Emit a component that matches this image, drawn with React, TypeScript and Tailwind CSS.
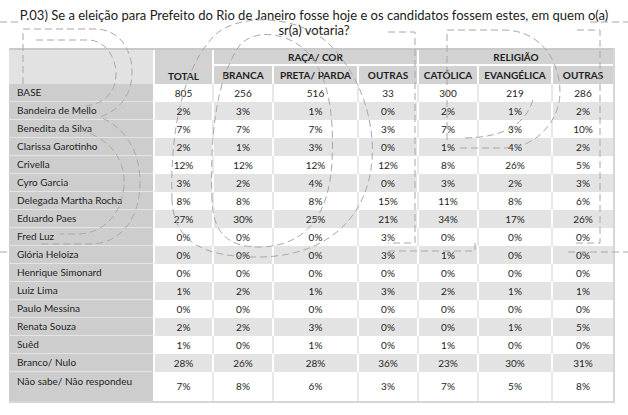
import React from "react";

const rows: string[][] = [
  ["BASE", "805", "256", "516", "33", "300", "219", "286"],
  ["Bandeira de Mello", "2%", "3%", "1%", "0%", "2%", "1%", "2%"],
  ["Benedita da Silva", "7%", "7%", "7%", "3%", "7%", "3%", "10%"],
  ["Clarissa Garotinho", "2%", "1%", "3%", "0%", "1%", "4%", "2%"],
  ["Crivella", "12%", "12%", "12%", "12%", "8%", "26%", "5%"],
  ["Cyro Garcia", "3%", "2%", "4%", "0%", "3%", "2%", "3%"],
  ["Delegada Martha Rocha", "8%", "8%", "8%", "15%", "11%", "8%", "6%"],
  ["Eduardo Paes", "27%", "30%", "25%", "21%", "34%", "17%", "26%"],
  ["Fred Luz", "0%", "0%", "0%", "3%", "0%", "0%", "0%"],
  ["Glória Heloiza", "0%", "0%", "0%", "3%", "1%", "0%", "0%"],
  ["Henrique Simonard", "0%", "0%", "0%", "0%", "0%", "0%", "0%"],
  ["Luiz Lima", "1%", "2%", "1%", "3%", "2%", "1%", "1%"],
  ["Paulo Messina", "0%", "0%", "0%", "0%", "0%", "0%", "0%"],
  ["Renata Souza", "2%", "2%", "3%", "0%", "0%", "1%", "5%"],
  ["Suêd", "1%", "0%", "1%", "0%", "1%", "0%", "0%"],
  ["Branco/ Nulo", "28%", "26%", "28%", "36%", "23%", "30%", "31%"],
  ["Não sabe/ Não respondeu", "7%", "8%", "6%", "3%", "7%", "5%", "8%"],
];

const font = { fontFamily: "Lato, 'Open Sans', sans-serif" };

function Watermark() {
  const common = {
    fill: "none",
    stroke: "#a8a8a8",
    strokeWidth: 1,
    strokeDasharray: "7 4",
  };
  return (
    <svg
      className="absolute left-0 top-0 pointer-events-none"
      width={628}
      height={415}
      viewBox="0 0 628 415"
    >
      <path {...common} d="M0,22 H22" />
      <path {...common} d="M590,22 H628" />
      <path {...common} d="M0,252 H9" />
      <path {...common} d="M568,252 H628" />
      {/* left B */}
      <path
        {...common}
        d="M23,84 V29 H95 C118,29 132,48 132,72 C132,95 120,110 100,117 C126,128 140,152 140,182 C140,222 118,244 90,244 H40"
      />
      <path
        {...common}
        d="M36,40 H88 C104,40 116,56 116,74 C116,92 104,104 86,106 M80,130 C110,138 126,160 124,186 C122,212 106,232 80,234 H60"
      />
      {/* middle oval */}
      <path
        {...common}
        d="M172,200 C170,140 180,70 215,35 C240,12 300,15 330,45 C360,75 375,120 372,160 C368,215 330,255 262,257 C200,258 174,240 172,200 Z"
      />
      <path
        {...common}
        d="M212,200 C210,140 215,80 240,45 C255,28 290,32 310,55 C330,80 334,120 332,160 C330,210 310,245 262,247 C225,248 213,230 212,200 Z"
      />
      {/* right shapes */}
      <path {...common} d="M388,32 H415 V243 H388" />
      <path {...common} d="M388,251 H475 V243" />
      <path
        {...common}
        d="M447,140 V30 H503 C540,30 560,60 560,92 C560,122 535,148 505,148 H458"
      />
      <path {...common} d="M533,100 C525,124 505,138 462,138" />
      <path {...common} d="M577,30 H600 V243 H575" />
    </svg>
  );
}

const colW = [
  "w-[146px]",
  "w-[59px]",
  "w-[60px]",
  "w-[85px]",
  "w-[60px]",
  "w-[60px]",
  "w-[74px]",
  "w-[60px]",
];

export default function App() {
  return (
    <div
      className="relative w-[628px] h-[415px] bg-white text-[#1e1e1e] overflow-hidden"
      style={font}
    >
      <div className="pt-[8px] flex flex-col items-center text-[13px] leading-[15px] text-[#1a1a1a] whitespace-nowrap">
        <div>
          P.03) Se a eleição para Prefeito do Rio de Janeiro fosse hoje e os
          candidatos fossem estes, em quem o(a)
        </div>
        <div>sr(a) votaria?</div>
      </div>

      <div className="ml-[9px] mt-[10px] w-[606px] border-r-2 border-b-2 border-[#d6d6d6]">
        {/* header */}
        <div className="flex border-t-2 border-[#c9c9c9] text-[10px] font-bold">
          <div className="w-[146px] h-[34px] bg-[#e2e2e2] border-r-2 border-white" />
          <div className="w-[59px] h-[34px] bg-[#d2d2d2] border-r-2 border-white flex items-end justify-center">
            TOTAL
          </div>
          <div className="flex flex-col">
            <div className="w-[205px] h-[16px] bg-[#d2d2d2] border-r-2 border-b-2 border-white flex items-center justify-center">
              RAÇA/ COR
            </div>
            <div className="flex h-[18px]">
              <div className="w-[60px] bg-[#d2d2d2] border-r-2 border-white flex items-center justify-center">
                BRANCA
              </div>
              <div className="w-[85px] bg-[#d2d2d2] border-r-2 border-white flex items-center justify-center">
                PRETA/ PARDA
              </div>
              <div className="w-[60px] bg-[#d2d2d2] border-r-2 border-white flex items-center justify-center">
                OUTRAS
              </div>
            </div>
          </div>
          <div className="flex flex-col">
            <div className="w-[194px] h-[16px] bg-[#d2d2d2] border-b-2 border-white flex items-center justify-center">
              RELIGIÃO
            </div>
            <div className="flex h-[18px]">
              <div className="w-[60px] bg-[#d2d2d2] border-r-2 border-white flex items-center justify-center">
                CATÓLICA
              </div>
              <div className="w-[74px] bg-[#d2d2d2] border-r-2 border-white flex items-center justify-center">
                EVANGÉLICA
              </div>
              <div className="w-[60px] bg-[#d2d2d2] flex items-center justify-center">
                OUTRAS
              </div>
            </div>
          </div>
        </div>

        {/* body */}
        {rows.map((r, i) => {
          const gray = i % 2 === 1;
          const last = i === rows.length - 1;
          return (
            <div
              key={i}
              className={
                "flex text-[10px] " + (last ? "h-[29px]" : "h-[18px]")
              }
            >
              <div
                className={
                  "w-[146px] bg-[#cdcdcd] border-r-2 border-white pl-[8px] flex " +
                  (last ? "items-start pt-[2px]" : "items-center") +
                  (last ? "" : " border-b border-b-[#e4e4e4]")
                }
              >
                {r[0]}
              </div>
              {r.slice(1).map((v, j) => (
                <div
                  key={j}
                  className={
                    colW[j + 1] +
                    " flex items-center justify-center " +
                    (j < 6 ? "border-r-2 " : "") +
                    (gray
                      ? "bg-[#e3e3e3] border-white"
                      : "bg-white border-[#e8e8e8]")
                  }
                >
                  {v}
                </div>
              ))}
            </div>
          );
        })}
      </div>

      <Watermark />
    </div>
  );
}
